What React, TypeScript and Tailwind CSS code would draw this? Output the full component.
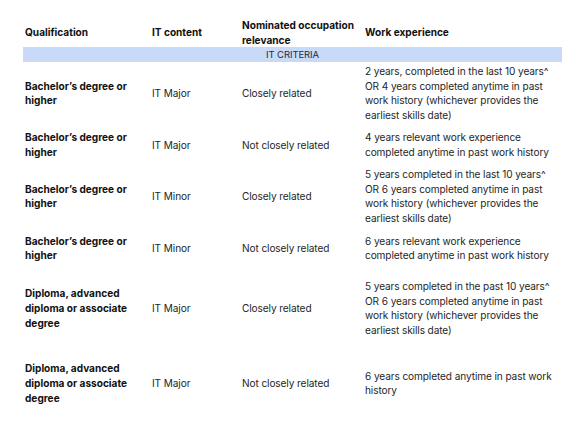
import React from 'react';

type Row = {
  qual: string[];
  content: string;
  relevance: string;
  experience: string[];
  height: string;
};

const rows: Row[] = [
  {
    qual: ['Bachelor’s degree or', 'higher'],
    content: 'IT Major',
    relevance: 'Closely related',
    experience: [
      '2 years, completed in the last 10 years^',
      'OR 4 years completed anytime in past',
      'work history (whichever provides the',
      'earliest skills date)',
    ],
    height: 'h-[62px]',
  },
  {
    qual: ['Bachelor’s degree or', 'higher'],
    content: 'IT Major',
    relevance: 'Not closely related',
    experience: ['4 years relevant work experience', 'completed anytime in past work history'],
    height: 'h-[41px]',
  },
  {
    qual: ['Bachelor’s degree or', 'higher'],
    content: 'IT Minor',
    relevance: 'Closely related',
    experience: [
      '5 years completed in the last 10 years^',
      'OR 6 years completed anytime in past',
      'work history (whichever provides the',
      'earliest skills date)',
    ],
    height: 'h-[62px]',
  },
  {
    qual: ['Bachelor’s degree or', 'higher'],
    content: 'IT Minor',
    relevance: 'Not closely related',
    experience: ['6 years relevant work experience', 'completed anytime in past work history'],
    height: 'h-[42px]',
  },
  {
    qual: ['Diploma, advanced', 'diploma or associate', 'degree'],
    content: 'IT Major',
    relevance: 'Closely related',
    experience: [
      '5 years completed in the past 10 years^',
      'OR 6 years completed anytime in past',
      'work history (whichever provides the',
      'earliest skills date)',
    ],
    height: 'h-[78px]',
  },
  {
    qual: ['Diploma, advanced', 'diploma or associate', 'degree'],
    content: 'IT Major',
    relevance: 'Not closely related',
    experience: ['6 years completed anytime in past work', 'history'],
    height: 'h-[72px]',
  },
];

const Lines: React.FC<{ lines: string[] }> = ({ lines }) => (
  <>
    {lines.map((l, i) => (
      <div key={i} className="whitespace-nowrap">
        {l}
      </div>
    ))}
  </>
);

export default function App() {
  return (
    <div className="w-[588px] h-[422px] bg-white pt-[18px] pl-[23px] font-['Inter','Liberation_Sans',sans-serif] text-[10.1px] leading-[14.7px] tracking-[-0.1px] text-[#262626]">
      <table className="table-fixed border-collapse w-[539px]">
        <colgroup>
          <col className="w-[127px]" />
          <col className="w-[90px]" />
          <col className="w-[123px]" />
          <col className="w-[199px]" />
        </colgroup>
        <thead>
          <tr className="h-[29px] text-left text-[#111]">
            <th className="px-[2px] align-middle font-bold tracking-normal">Qualification</th>
            <th className="px-[2px] align-middle font-bold tracking-normal">IT content</th>
            <th className="px-[2px] align-middle font-bold tracking-normal">
              Nominated occupation
              <br />
              relevance
            </th>
            <th className="px-[2px] align-middle font-bold tracking-normal">Work experience</th>
          </tr>
        </thead>
        <tbody>
          <tr className="h-[15px] bg-[#c9daf8]">
            <td colSpan={4} className="text-center text-[9.5px] leading-[15px] text-[#1f2a44]">
              IT CRITERIA
            </td>
          </tr>
          {rows.map((r, i) => (
            <tr key={i} className={r.height}>
              <td className="px-[2px] align-middle font-bold tracking-normal text-[#111]">
                <Lines lines={r.qual} />
              </td>
              <td className="px-[2px] align-middle">{r.content}</td>
              <td className="px-[2px] align-middle">{r.relevance}</td>
              <td className="px-[2px] align-middle">
                <Lines lines={r.experience} />
              </td>
            </tr>
          ))}
        </tbody>
      </table>
    </div>
  );
}
